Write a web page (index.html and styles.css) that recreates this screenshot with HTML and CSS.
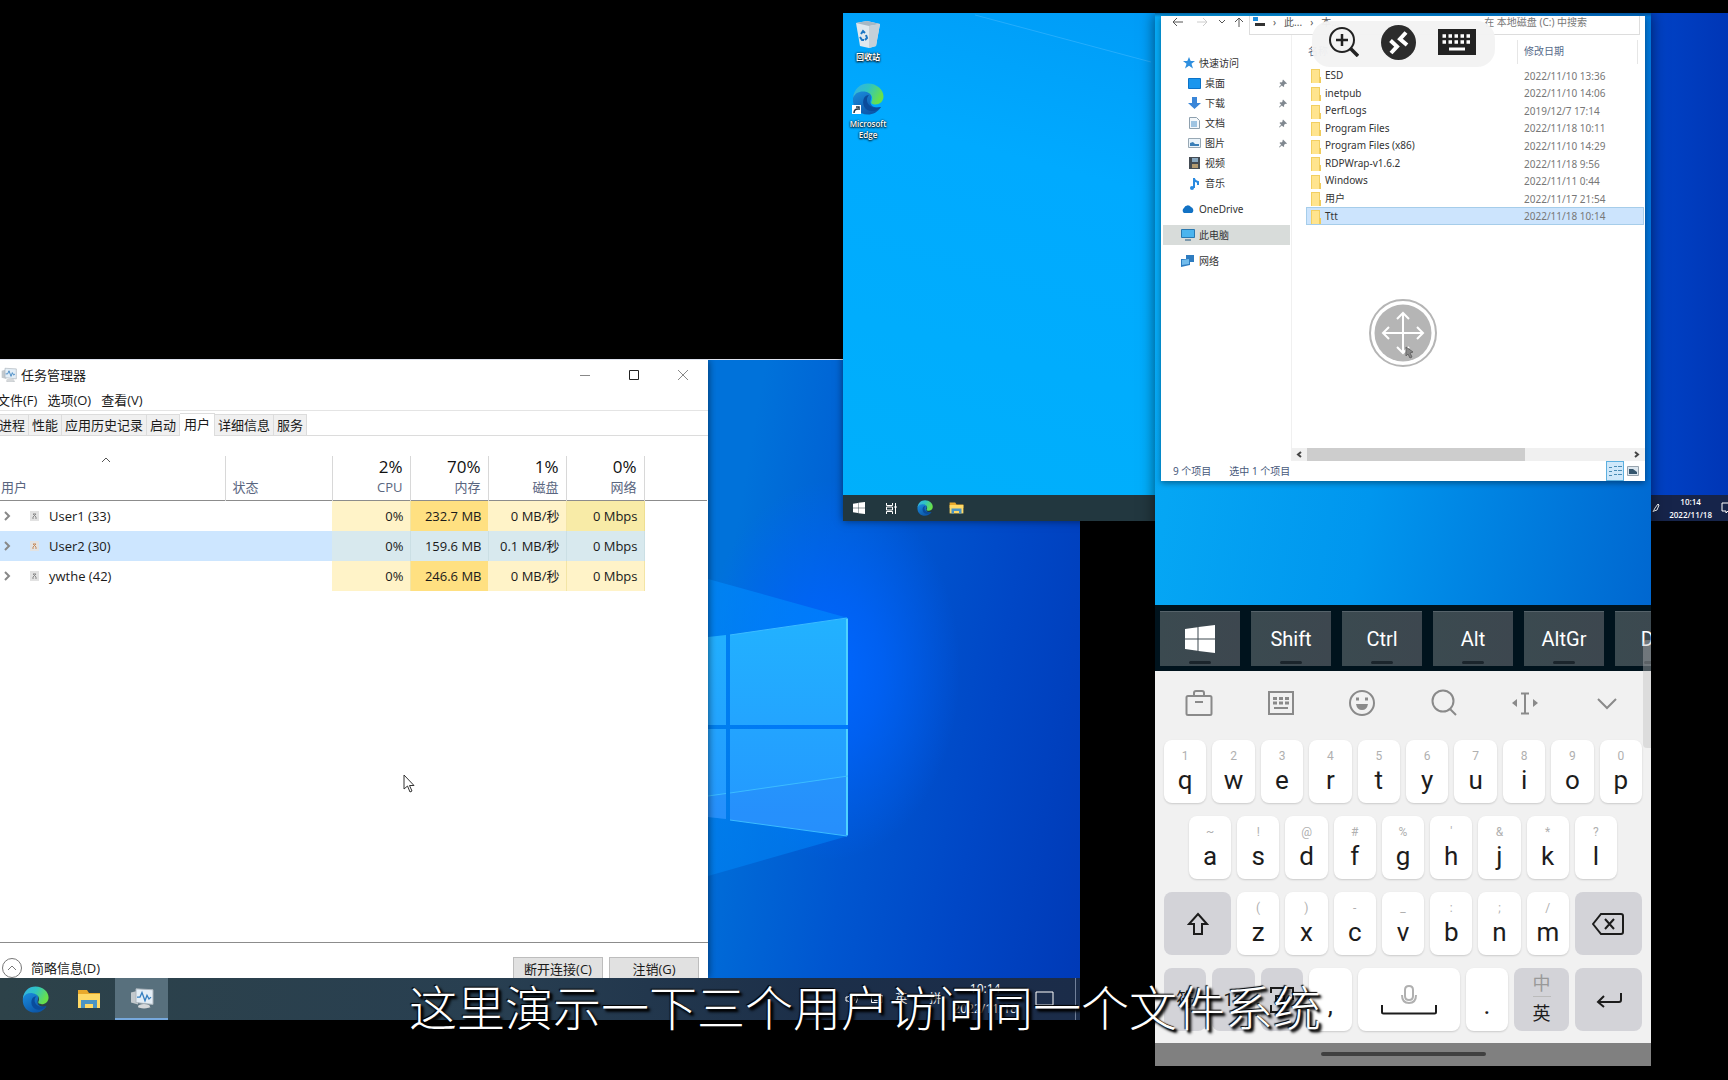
FILE: index.html
```html
<!DOCTYPE html>
<html lang="zh-CN">
<head>
<meta charset="utf-8">
<title>多用户远程桌面演示</title>
<link rel="stylesheet" href="styles.css">
</head>
<body>
<svg class="defs" aria-hidden="true">
  <defs>
    <linearGradient id="edgeTop" x1="0" y1="0" x2="1" y2="0.4"><stop offset="0" stop-color="#35aeea"/><stop offset="0.5" stop-color="#2fc3c4"/><stop offset="1" stop-color="#67e04b"/></linearGradient>
    <linearGradient id="edgeLow" x1="0" y1="0" x2="0.6" y2="1"><stop offset="0" stop-color="#1b8fe0"/><stop offset="1" stop-color="#0c56a8"/></linearGradient>
    <linearGradient id="pane" x1="0" y1="0" x2="0" y2="1"><stop offset="0" stop-color="#22b2ff"/><stop offset="1" stop-color="#2496ff"/></linearGradient>
    <linearGradient id="rayTop" x1="0" y1="0" x2="0" y2="1"><stop offset="0" stop-color="#008cff" stop-opacity=".6"/><stop offset="1" stop-color="#008cff" stop-opacity=".45"/></linearGradient>
    <symbol id="edge" viewBox="0 0 32 32" preserveAspectRatio="none">
      <path fill="url(#edgeLow)" d="M1 15C2 7 9 6 14 8c5 2 6 5 5 8-2 5 1 10 10 8-3 5-8 7.500-13 7.500C7 31.500 0 25 1 15z"/>
      <path fill="url(#edgeTop)" d="M1 15C2 6 8 .5 16 .5c9 0 15.500 6.500 15.500 13 0 5-4 8-8 8-3 0-5-1-4-3 2-4 0-9-7-10C7 8 3 10 1 15z"/>
      <path fill="#0a4c9c" d="M12 15c-3 7 2 14 9 13 3 0 6-2 8-4-8 2-13-1-14-6-.4-3 1-5 2-6-2 0-4 1-5 3z"/>
    </symbol>
    <symbol id="explorer" viewBox="0 0 24 20" preserveAspectRatio="none">
      <path fill="#e9a92b" d="M1 1h9l2 3h11v6H1z"/><path fill="#ffd966" d="M1 5h22v14H1z"/>
      <path fill="#4b94c4" d="M4 11h16v8h-4v-4H8v4H4z"/>
    </symbol>
    <symbol id="monitor" viewBox="0 0 24 24" preserveAspectRatio="none">
      <path fill="#c3c9cd" d="M1 6l7-2v15l-7-2z"/><path fill="#87929a" d="M3 8v8M9 21h10l2 2H8z"/>
      <path fill="#e4eef6" stroke="#a9b3ba" d="M6 2l17 1v16L6 17z"/><path fill="none" stroke="#357fc0" stroke-width="1.300" d="M7 11h3l2-5 3 9 2-6 2 4 2-2"/>
      <ellipse cx="14" cy="21" rx="6" ry="2.500" fill="#d5d8da"/>
    </symbol>
    <symbol id="windows" viewBox="0 0 30 28" preserveAspectRatio="none">
      <path fill="currentColor" d="M0 4l12.500-1.800v11.300H0zM13.500 2L30 0v13.500H13.500zM0 14.500h12.500v11.300L0 24zM13.500 14.500H30V28l-16.500-2z"/>
    </symbol>
    <symbol id="folder" viewBox="0 0 10 14" preserveAspectRatio="none"><path fill="#f2cf61" d="M0 0h9v14H0z"/><path fill="#ffe48e" d="M1 1h7v13H1z"/><path fill="#efcb5c" d="M8 8h2v6H8z"/></symbol>
    <symbol id="pin" viewBox="0 0 8 8"><path fill="#808890" d="M4 0l4 4-1 .5-.7-.2L5 5.600l.2 1.200-.7.700L2.800 5.900.5 8 0 7.500l2.100-2.300L.5 3.500l.7-.7 1.200.2L3.700 1.700 3.500 1z"/></symbol>
  </defs>
</svg>

<main class="stage">

  <section class="desktop desktop-a" aria-label="桌面 1">
    <svg class="wallpaper" width="372" height="660" viewBox="708 360 372 660" aria-hidden="true">
      <path fill="url(#rayTop)" d="M708 579l140 39v218l-140 40z"/>
      <path fill="url(#pane)" d="M708 637l18-2v90h-18zM730 635l118-17v107H730zM708 729h18v90l-18-2zM730 729h118v107l-118-16z"/>
      <path fill="#2a7ff5" opacity=".3" d="M708 796l18-2.500V819l-18-2zM730 793l118-17v60l-118-16z"/>
      <path fill="none" stroke="#4fd2ff" stroke-width="2" d="M847 619v106M847 729v106"/>
      <path fill="none" stroke="#3cbcff" d="M730 635l117-17M730 820l117 16M708 796l18-2.500M730 793l118-17"/>
    </svg>

    <article class="taskmgr">
      <header class="tm-title">
        <svg width="16" height="15"><use href="#monitor"/></svg><span>任务管理器</span>
        <div class="tm-controls">
          <button aria-label="最小化"><svg width="10" height="10"><path d="M0 5.500h10"/></svg></button>
          <button aria-label="最大化" class="max"><svg width="10" height="10"><path d="M.5.500h9v9h-9z"/></svg></button>
          <button aria-label="关闭"><svg width="10" height="10"><path d="M0 0l10 10M10 0L0 10"/></svg></button>
        </div>
      </header>
      <nav class="tm-menu"><button>文件(F)</button><button>选项(O)</button><button>查看(V)</button></nav>
      <div class="tm-tabs" role="tablist">
        <button role="tab">进程</button><button role="tab">性能</button><button role="tab">应用历史记录</button><button role="tab">启动</button><button role="tab" aria-selected="true">用户</button><button role="tab">详细信息</button><button role="tab">服务</button>
      </div>
      <table class="tm-table">
        <colgroup><col class="c-user"><col class="c-state"><col class="c-num"><col class="c-num"><col class="c-num"><col class="c-num"><col></colgroup>
        <thead><tr>
          <th class="left"><svg class="sort" width="10" height="6"><path d="M1 5l4-4 4 4"/></svg><span>用户</span></th>
          <th class="left"><span>状态</span></th>
          <th><b>2%</b><span>CPU</span></th><th><b>70%</b><span>内存</span></th><th><b>1%</b><span>磁盘</span></th><th><b>0%</b><span>网络</span></th><th></th>
        </tr></thead>
        <tbody>
          <tr><td class="user"><svg width="42" height="12"><path class="chev" d="M5 2l4 4-4 4"/><path class="badge" d="M30 1h9v10h-9z"/><path class="face" d="M33 9V7l3-3-3 0 3 3v2"/></svg>User1 (33)</td><td></td><td class="low">0%</td><td class="high">232.7 MB</td><td class="low">0 MB/秒</td><td class="mid">0 Mbps</td><td></td></tr>
          <tr class="selected"><td class="user"><svg width="42" height="12"><path class="chev" d="M5 2l4 4-4 4"/><path class="badge" d="M30 1h9v10h-9z"/><path class="face warm" d="M33 9V7l3-3-3 0 3 3v2"/></svg>User2 (30)</td><td></td><td class="low">0%</td><td class="high">159.6 MB</td><td class="low">0.1 MB/秒</td><td class="mid">0 Mbps</td><td></td></tr>
          <tr><td class="user"><svg width="42" height="12"><path class="chev" d="M5 2l4 4-4 4"/><path class="badge" d="M30 1h9v10h-9z"/><path class="face" d="M33 9V7l3-3-3 0 3 3v2"/></svg>ywthe (42)</td><td></td><td class="low">0%</td><td class="high">246.6 MB</td><td class="low">0 MB/秒</td><td class="low">0 Mbps</td><td></td></tr>
        </tbody>
      </table>
      <footer class="tm-footer">
        <button class="brief"><svg width="22" height="22"><circle cx="11" cy="11" r="9.500"/><path d="M7 13l4-4 4 4"/></svg>简略信息(D)</button>
        <button class="push">断开连接(C)</button><button class="push">注销(G)</button>
      </footer>
    </article>

    <div class="taskbar taskbar-a">
      <button class="tb" aria-label="Edge"><svg width="27" height="27"><use href="#edge"/></svg></button>
      <button class="tb" aria-label="文件资源管理器"><svg width="24" height="20"><use href="#explorer"/></svg></button>
      <button class="tb active" aria-label="任务管理器"><svg width="24" height="22"><use href="#monitor"/></svg></button>
      <div class="tray-a">
        <svg width="14" height="14" viewBox="0 0 14 14"><path d="M1 5h2l4-4v12L3 9H1zM9 5q2 2 0 4M11 3q3 4 0 8"/></svg>
        <svg width="12" height="8" viewBox="0 0 12 8"><path d="M.5.500h11v7H.5zM3 5.500h6"/></svg>
        <span>英</span>
        <span class="ime">拼</span>
        <time>10:14<br>2022/11/18</time>
        <svg width="19" height="16" viewBox="0 0 19 16"><path d="M1 1h17v13H1z"/></svg>
        <i class="peek"></i>
      </div>
    </div>
    <svg class="cursor" width="12" height="19" viewBox="0 0 12 19"><path fill="#fff" stroke="#333" d="M1 1v14l3.500-3 2.500 6 2-1-2.500-5.500H11z"/></svg>
  </section>

  <section class="desktop desktop-b" aria-label="桌面 2">
    <div class="icons-b">
      <div class="dicon">
        <svg width="26" height="28" viewBox="0 0 26 28"><path fill="#dfe8ee" d="M1 3l11-2 13 3-4 22-7 2-9-2z"/><path fill="#a7b8c4" d="M1 3l11-2 13 3-11 2z"/><path fill="#c5d0d8" d="M14 6l11-2-4 22-7 2z"/><path fill="none" stroke="#1c76c4" stroke-width="2" d="M6 14l2-3 2 2M5 17l2 3h2M11 15l1 3-2 2"/></svg>
        <span>回收站</span>
      </div>
      <div class="dicon">
        <div class="shortcut"><svg width="32" height="32"><use href="#edge"/></svg><svg class="arrow" width="9" height="9"><path fill="#fff" d="M0 0h9v9H0z"/><path fill="none" stroke="#234" stroke-width="1.500" d="M2 8q0-4 4-4M4 2h3v3"/></svg></div>
        <span>Microsoft Edge</span>
      </div>
    </div>
    <svg class="beam" viewBox="0 0 312 60" width="312" height="60"><path fill="none" stroke="#47bbff" opacity=".5" d="M132 2l176 47"/></svg>
    <div class="taskbar taskbar-b">
      <button aria-label="开始"><svg width="12" height="12"><use href="#windows"/></svg></button>
      <button aria-label="任务视图"><svg width="12" height="11"><path fill="none" stroke="#fff" d="M1.500 0v2.500h6V0M1.500 11V8.500h6V11M1.500 4h6v3h-6zM10.500 0v11M9 4h3"/></svg></button>
      <button aria-label="Edge"><svg width="16" height="16"><use href="#edge"/></svg></button>
      <button aria-label="文件资源管理器"><svg width="15" height="12"><use href="#explorer"/></svg></button>
      <div class="tray-b">
        <svg width="8" height="10"><path fill="none" stroke="#fff" d="M1 9l2-4 3-4 1 1-2 5-3 1"/></svg>
        <time>10:14<br>2022/11/18</time>
        <svg width="14" height="12"><path fill="none" stroke="#fff" d="M1 1h12v8H7L5 11V9H1z"/></svg>
      </div>
    </div>
  </section>

  <section class="phone" aria-label="手机远程桌面">
    <div class="phone-screen">
      <article class="files">
        <div class="addr">
          <svg width="85" height="12"><path class="n" d="M12 6h10M16 2l-4 4 4 4"/><path class="n dim" d="M36 6h10M42 2l4 4-4 4"/><path class="n" d="M58 4l3 3 3-3M78 11V2M74 6l4-4 4 4"/></svg>
          <div class="crumbs">
            <svg width="12" height="12"><path fill="#1e90e0" d="M0 1h5v4H0z"/><path fill="#333" d="M2 7h10v3H2z"/></svg>
            <span>›</span><span>此...</span><span>›</span><span>本...</span>
            <span class="search">在 本地磁盘 (C:) 中搜索</span>
          </div>
        </div>
        <div class="files-body">
          <nav class="tree">
            <a href="#"><svg width="12" height="12"><path fill="#2f8fdf" d="M6 0l1.700 4H12L8.500 6.800 10 11.500 6 8.800 2 11.500l1.500-4.700L0 4h4.300z"/></svg>快速访问</a>
            <a href="#" class="sub"><svg width="13" height="11"><path fill="#1a96ee" stroke="#0a72c8" d="M.5.500h12v10H.5z"/></svg>桌面<svg class="pinned" width="8" height="9"><use href="#pin"/></svg></a>
            <a href="#" class="sub"><svg width="13" height="12"><path fill="#3a86d8" d="M4 0h5v6h4l-6.500 6L0 6h4z"/></svg>下载<svg class="pinned" width="8" height="9"><use href="#pin"/></svg></a>
            <a href="#" class="sub"><svg width="13" height="12"><path fill="#f4f8fb" stroke="#8ea0ae" d="M1.500.5h7l3 3v8h-10z"/><path stroke="#4a90c8" d="M3 5h6M3 7h6M3 9h6"/></svg>文档<svg class="pinned" width="8" height="9"><use href="#pin"/></svg></a>
            <a href="#" class="sub"><svg width="13" height="10"><path fill="#eaf4fb" stroke="#98a8b4" d="M.5.500h12v9H.5z"/><path fill="#3a7fb8" d="M2 8V5l3-1 2 2h4v2z"/></svg>图片<svg class="pinned" width="8" height="9"><use href="#pin"/></svg></a>
            <a href="#" class="sub"><svg width="13" height="12"><path fill="#444c54" d="M1 0h11v12H1z"/><path fill="#88a8c0" d="M4 1h6v4H4z"/><path fill="#b29a70" d="M4 7h6v4H4z"/></svg>视频</a>
            <a href="#" class="sub"><svg width="13" height="13"><path fill="none" stroke="#2a8ae0" stroke-width="2" d="M6 11V1q0 3 4 4v3"/><circle cx="4" cy="11" r="2" fill="#2a8ae0"/></svg>音乐</a>
            <a href="#" class="gap"><svg width="14" height="10"><path fill="#1272c4" d="M3 9a3 3 0 010-5 4 4 0 017-1 3.500 3.500 0 011 6z"/></svg>OneDrive</a>
            <a href="#" class="gap current"><svg width="14" height="12"><path fill="#4ab4ee" stroke="#2878b0" d="M.5.500h13v8H.5z"/><path fill="#7a98ac" d="M4 10h6v2H4z"/></svg>此电脑</a>
            <a href="#" class="gap"><svg width="14" height="12"><path fill="#2e7cc0" d="M5 0h8v7H9v3L0 12V4h5z"/><path fill="#72bcec" d="M1 5l7-1v5l-7 1z"/></svg>网络</a>
          </nav>
          <div class="list">
            <div class="list-head"><span class="h-name">名称</span><span class="h-date">修改日期</span></div>
            <table class="list-table">
              <colgroup><col class="l-name"><col></colgroup>
              <tbody>
              <tr><td><svg width="10" height="14"><use href="#folder"/></svg>ESD</td><td>2022/11/10 13:36</td></tr>
              <tr><td><svg width="10" height="14"><use href="#folder"/></svg>inetpub</td><td>2022/11/10 14:06</td></tr>
              <tr><td><svg width="10" height="14"><use href="#folder"/></svg>PerfLogs</td><td>2019/12/7 17:14</td></tr>
              <tr><td><svg width="10" height="14"><use href="#folder"/></svg>Program Files</td><td>2022/11/18 10:11</td></tr>
              <tr><td><svg width="10" height="14"><use href="#folder"/></svg>Program Files (x86)</td><td>2022/11/10 14:29</td></tr>
              <tr><td><svg width="10" height="14"><use href="#folder"/></svg>RDPWrap-v1.6.2</td><td>2022/11/18 9:56</td></tr>
              <tr><td><svg width="10" height="14"><use href="#folder"/></svg>Windows</td><td>2022/11/11 0:44</td></tr>
              <tr><td><svg width="10" height="14"><use href="#folder"/></svg>用户</td><td>2022/11/17 21:54</td></tr>
              <tr class="selected"><td><svg width="10" height="14"><use href="#folder"/></svg>Ttt</td><td>2022/11/18 10:14</td></tr>
              </tbody>
            </table>
            <div class="hscroll"><svg width="15" height="13"><path d="M9 4L6 6.500 9 9"/></svg><i class="thumb"></i><svg class="end" width="15" height="13"><path d="M6 4l3 2.500L6 9"/></svg></div>
          </div>
        </div>
        <footer class="files-foot"><span>9 个项目</span><span>选中 1 个项目</span>
          <div class="views"><button class="on" aria-label="详细信息"><svg width="14" height="12"><path stroke="#4a8cb4" d="M1 2.500h3M1 6.500h3M1 10.500h3M6 1.500h3M10 1.500h4M6 5.500h3M10 5.500h4M6 9.500h3M10 9.500h4"/></svg></button><button aria-label="大图标"><svg width="12" height="10"><path fill="#dce6ee" stroke="#98a4ae" d="M.5.500h11v9H.5z"/><path fill="#35566e" d="M2 3h4l4 3v2H2z"/></svg></button></div>
        </footer>
      </article>

      <div class="pill">
        <button aria-label="缩放"><svg width="30" height="30" viewBox="0 0 30 30"><circle cx="13" cy="13" r="12" fill="none" stroke="#222" stroke-width="2"/><path stroke="#222" stroke-width="2.500" d="M13 7v12M7 13h12"/><path stroke="#222" stroke-width="3.500" d="M21.500 21.500L29 29"/></svg></button>
        <button aria-label="远程桌面"><svg width="35" height="35" viewBox="0 0 35 35"><circle cx="17.500" cy="17.500" r="17.500" fill="#2c2c2c"/><path fill="none" stroke="#fff" stroke-width="4" d="M9.500 15.500l6.500 6-6 6.500M25 7.500l-6 6.500 7 6"/></svg></button>
        <button aria-label="键盘"><svg width="38" height="26" viewBox="0 0 38 26"><path fill="#222" d="M0 0h38v26H0z"/><path stroke="#fff" stroke-width="3.500" stroke-dasharray="3.500 2.500" d="M4.500 7h29M4.500 13h29"/><path stroke="#fff" stroke-width="3" d="M11 20h16"/></svg></button>
      </div>
      <svg class="pan" width="68" height="68" viewBox="0 0 68 68"><circle cx="34" cy="34" r="33" fill="#fff" stroke="#b5b5b5" stroke-width="2"/><circle cx="34" cy="34" r="28.500" fill="#b5b5b5"/><path fill="none" stroke="#fff" stroke-width="2" d="M34 14v40M14 34h40M28 20l6-6 6 6M28 48l6 6 6-6M20 28l-6 6 6 6M48 28l6 6-6 6"/><path fill="#888" stroke="#666" d="M37 48v9l2-2 2 4 2-1-2-4 3-1z"/></svg>
    </div>

    <div class="modkeys">
      <button aria-label="Win"><svg width="30" height="28"><use href="#windows"/></svg></button><button>Shift</button><button>Ctrl</button><button>Alt</button><button>AltGr</button><button>Del</button>
    </div>

    <div class="keyboard">
      <div class="kb-tools">
        <button aria-label="工具箱"><svg width="28" height="28" viewBox="0 0 28 28"><path d="M3 7h22q1.500 0 1.500 1.500v16q0 1.500-1.500 1.500H3q-1.500 0-1.500-1.500v-16Q1.500 7 3 7zM9 7V4q0-2 2-2h6q2 0 2 2v3M10 13h8"/></svg></button>
        <button aria-label="键盘"><svg width="28" height="28" viewBox="0 0 28 28"><path d="M2 3h24v22H2zM7 19h14"/><path stroke-width="3" stroke-dasharray="4 2" d="M6 9.500h16M6 14h16"/></svg></button>
        <button aria-label="表情"><svg width="28" height="28" viewBox="0 0 28 28"><circle cx="14" cy="14" r="12"/><path class="fill" d="M8 15h12q-1 6-6 6t-6-6z"/><path stroke-width="3" d="M8 10h3M17 10h3"/></svg></button>
        <button aria-label="搜索"><svg width="28" height="28" viewBox="0 0 28 28"><circle cx="13" cy="12" r="10.500"/><path d="M20 20l6 6"/></svg></button>
        <button aria-label="光标"><svg width="28" height="28" viewBox="0 0 28 28"><path d="M14 5v19M10 4.500h8M10 24.500h8"/><path class="fill" d="M6 10v8l-5-4zM22 10v8l5-4z"/></svg></button>
        <button aria-label="收起"><svg width="28" height="28" viewBox="0 0 28 28"><path d="M5 10l9 9 9-9"/></svg></button>
      </div>
      <div class="krow">
        <button class="key"><small>1</small>q</button><button class="key"><small>2</small>w</button><button class="key"><small>3</small>e</button><button class="key"><small>4</small>r</button><button class="key"><small>5</small>t</button><button class="key"><small>6</small>y</button><button class="key"><small>7</small>u</button><button class="key"><small>8</small>i</button><button class="key"><small>9</small>o</button><button class="key"><small>0</small>p</button>
      </div>
      <div class="krow inset">
        <button class="key"><small>~</small>a</button><button class="key"><small>!</small>s</button><button class="key"><small>@</small>d</button><button class="key"><small>#</small>f</button><button class="key"><small>%</small>g</button><button class="key"><small>'</small>h</button><button class="key"><small>&amp;</small>j</button><button class="key"><small>*</small>k</button><button class="key"><small>?</small>l</button>
      </div>
      <div class="krow">
        <button class="key fn wide" aria-label="Shift"><svg width="22" height="24" viewBox="0 0 22 24"><path d="M11 2l9 10h-5v10H7V12H2z"/></svg></button><button class="key"><small>(</small>z</button><button class="key"><small>)</small>x</button><button class="key"><small>-</small>c</button><button class="key"><small>_</small>v</button><button class="key"><small>:</small>b</button><button class="key"><small>;</small>n</button><button class="key"><small>/</small>m</button><button class="key fn wide" aria-label="退格"><svg width="32" height="22" viewBox="0 0 32 22"><path d="M9 1h20q2 0 2 2v16q0 2-2 2H9L1 11zM13 6l9 10M22 6l-9 10"/></svg></button>
      </div>
      <div class="krow">
        <button class="key fn text">符</button><button class="key fn text">12</button><button class="key fn" aria-label="切换"><svg width="24" height="26" viewBox="0 0 24 26"><path d="M1 6V1h22v12M1 18v7h8M6 9h8v8H6z"/></svg></button><button class="key mark">,</button>
        <button class="key space" aria-label="空格"><svg width="56" height="30" viewBox="0 0 56 30"><path class="mic" d="M28 1q4 0 4 4v6q0 4-4 4t-4-4V5q0-4 4-4zM21 10q0 8 7 8t7-8"/><path d="M1 20v7q0 1.500 1.500 1.500h51q1.500 0 1.500-1.500v-7"/></svg></button>
        <button class="key mark">.</button><button class="key fn lang"><span>中</span><span>英</span></button><button class="key fn wide" aria-label="回车"><svg width="26" height="16" viewBox="0 0 26 16"><path d="M25 1v7q0 2-2 2H2M8 4l-6 6 6 5"/></svg></button>
      </div>
    </div>
    <div class="gesture"><i></i></div>
    <i class="grip"></i>
  </section>

  <p class="caption">这里演示一下三个用户访问同一个文件系统</p>
</main>
</body>
</html>
```

FILE: styles.css
```css
* { box-sizing: border-box; }
body { margin: 0; background: #000; font-family: "Open Sans", "Noto Sans CJK SC", sans-serif; }
button { border: 0; padding: 0; margin: 0; background: none; font: inherit; color: inherit; display: flex; align-items: center; justify-content: center; }
a { color: inherit; text-decoration: none; }
table { border-collapse: collapse; table-layout: fixed; width: 100%; }
td, th { padding: 0; font-weight: 400; }
svg { display: block; flex: none; }
.defs { position: absolute; width: 0; height: 0; }

.stage { position: relative; min-height: 100vh; overflow: hidden; background: #000; }
.desktop { position: absolute; display: flex; flex-direction: column; overflow: hidden; }

/* First desktop */
.desktop-a {
  left: 0; top: 359px; width: 1080px; height: 661px; border-top: 1px solid #dfe3ee;
  background: radial-gradient(ellipse 130px 190px at 830px 310px, #0066ff 0, rgba(0,100,255,.7) 40%, transparent 100%), linear-gradient(100deg, #0072da 64%, #0056d0 78%, #0047c6 88%, #0039b6 100%);
}
.wallpaper { position: absolute; left: 708px; top: 0; }
.taskmgr { position: relative; flex: 1; width: 708px; display: flex; flex-direction: column; background: #fff; color: #1a1a1a; font-size: 13px; line-height: 18px; box-shadow: 0 0 8px rgba(0,0,0,.6); }
.tm-title { display: flex; align-items: center; gap: 4px; height: 29px; padding-left: 1px; }
.tm-controls { display: flex; margin-left: auto; padding-right: 1px; }
.tm-controls button { width: 49px; height: 26px; }
.tm-controls path { fill: none; stroke: #888; }
.tm-controls .max path { stroke: #222; }
.sort path { fill: none; stroke: #555; }
.tm-menu { display: flex; gap: 10px; height: 22px; margin-left: -3px; border-bottom: 1px solid #e4e4e4; }
.tm-tabs { display: flex; align-items: flex-end; height: 25px; margin-left: -5px; border-bottom: 1px solid #dcdcdc; }
.tm-tabs button { height: 21px; padding: 0 3px 0 2px; background: #f0f0f0; border: 1px solid #dcdcdc; border-bottom: 0; }
.tm-tabs button + button { border-left: 0; padding-left: 3px; }
.tm-tabs button:first-child { padding-left: 3px; }
.tm-tabs button[aria-selected] { height: 23px; padding: 0 4px 3px; background: #fff; margin-bottom: -1px; }
.tm-table { margin-top: 20px; }
.c-user { width: 225px; } .c-state { width: 107px; } .c-num { width: 78px; }
.tm-table thead tr { height: 44px; border-bottom: 1px solid #8c8c8c; }
.tm-table th { position: relative; text-align: right; vertical-align: bottom; padding: 0 7px 4px 0; border-right: 1px solid #d8d8d8; color: #5a6680; }
.tm-table th.left { text-align: left; padding-left: 7px; }
.tm-table th.left:first-child { padding-left: 1px; }
.tm-table th:last-child { border-right: 0; }
.tm-table th b, .tm-table th span { display: block; }
.tm-table th b { font-weight: 400; font-size: 17px; line-height: 22px; color: #111; }
.tm-table thead th { line-height: 18px; padding-top: 0; height: 44px; }
.sort { margin: 0 0 15px 100px; }
.tm-table tbody tr { height: 30px; }
.tm-table tbody td { text-align: right; padding-right: 6px; border-right: 1px solid transparent; }
.tm-table tbody .user { display: flex; align-items: center; gap: 7px; height: 30px; border: 0; }
.chev { fill: none; stroke: #888; stroke-width: 2; }
.badge { fill: #e2e2e2; }
.face { fill: none; stroke: #888; }
.face.warm { stroke: #c68a5a; }
.tm-table .low { background: #fff3c8; border-color: #f3e5a6; }
.tm-table .high { background: #ffe081; }
.tm-table .mid { background: #f8eba7; border-color: #eedf92; }
.tm-table .selected { background: #cde6ff; }
.tm-table .selected .low, .tm-table .selected .high, .tm-table .selected .mid { background: #d8e9ee; border-color: #cbdfe4; }
.tm-table .selected td:last-child { background: #fff; }
.tm-footer { display: flex; align-items: flex-end; gap: 6px; height: 36px; margin-top: auto; padding-right: 9px; border-top: 1px solid #8c8c8c; }
.brief { gap: 8px; height: 20px; margin-right: auto; padding-left: 1px; }
.brief svg { fill: none; stroke: #777; }
.push { width: 90px; height: 21px; padding-top: 2px; background: #e1e1e1; border: 1px solid #bdbdbd; border-bottom: 0; }

.taskbar { display: flex; color: #fff; }
.taskbar-a { position: relative; height: 42px; padding-left: 9px; background: linear-gradient(90deg, #2d4249, #283f51 45%, #1c2f49 75%, #1b2c49); }
.tb { width: 53px; }
.tb.active { background: #58707d; border-bottom: 2px solid #76a8dc; }
.tray-a { display: flex; align-items: center; gap: 12px; margin-left: auto; padding-right: 4px; font-size: 12px; line-height: 20px; text-align: center; }
.tray-a svg { fill: none; stroke: #fff; }
.tray-a time { margin-right: 6px; }
.ime { padding-left: 10px; }
.peek { width: 1px; align-self: stretch; background: #718099; margin-left: 9px; }
.cursor { position: absolute; left: 403px; top: 414px; }

/* Second desktop */
.desktop-b {
  left: 843px; right: 0; top: 13px; height: 508px; box-shadow: 0 0 8px rgba(0,0,0,.5);
  background: linear-gradient(90deg, transparent 310px, #0044c8 800px, #0036b6), linear-gradient(195deg, #0090f0, #00aaff 45%, #00b0fb);
}
.icons-b { display: flex; flex-direction: column; gap: 21px; width: 50px; padding-top: 7px; }
.dicon { display: flex; flex-direction: column; align-items: center; gap: 3px; color: #fff; font-size: 8px; line-height: 11px; font-weight: 600; text-align: center; text-shadow: 0 1px 2px #000, 0 0 2px #000; }
.shortcut { position: relative; }
.arrow { position: absolute; left: 0; bottom: 1px; }
.beam { position: absolute; left: 0; top: 0; }
.taskbar-b { height: 26px; margin-top: auto; padding-left: 3px; background: linear-gradient(90deg, #22373f 35%, #16244a 92%); }
.taskbar-b button { width: 32px; padding-right: 6px; }
.taskbar-b button:nth-child(n+3) { padding-right: 3px; }
.tray-b { display: flex; align-items: center; gap: 9px; margin-left: auto; margin-right: -7px; font-size: 8px; font-weight: 600; line-height: 13px; text-align: center; }

/* Phone */
.phone { position: absolute; left: 1155px; top: 13px; width: 496px; display: flex; flex-direction: column; box-shadow: 0 0 14px rgba(0,0,0,.55); overflow: hidden; }
.phone-screen { position: relative; height: 592px; padding: 3px 6px 0; background: linear-gradient(180deg, rgba(0,40,90,.5), transparent 4px), linear-gradient(100deg, #06a9f5 10%, #0096ee 50%, #0067d0 100%); }
.files { display: flex; flex-direction: column; height: 465px; background: #fff; font-family: "Noto Sans", "Noto Sans CJK SC", sans-serif; font-size: 10px; line-height: 14px; color: #333; overflow: hidden; box-shadow: 0 2px 6px rgba(0,0,0,.4); }
.addr { display: flex; gap: 3px; height: 19px; padding-right: 5px; }
.n { fill: none; stroke: #555; }
.n.dim { stroke: #ccc; }
.crumbs { flex: 1; display: flex; gap: 8px; padding-left: 3px; line-height: 12px; color: #555; border: 1px solid #ddd; border-top: 0; }
.search { margin-left: auto; padding-right: 52px; color: #777; }
.files-body { flex: 1; display: flex; }
.tree { width: 131px; padding: 18px 1px 0 2px; border-right: 1px solid #f0f0f0; }
.tree a { display: flex; align-items: center; gap: 4px; height: 20px; padding-left: 20px; }
.tree .sub { padding-left: 25px; gap: 4px; }
.tree .gap { margin-top: 6px; padding-left: 18px; }
.tree .current { background: #d8dcda; }
.tree .pinned { margin-left: auto; margin-right: 3px; }
.list { flex: 1; min-width: 0; display: flex; flex-direction: column; overflow: hidden; }
.list-head { display: flex; height: 24px; margin: 5px 0 3px 14px; line-height: 22px; color: #566a8a; }
.h-name { width: 212px; padding-left: 2px; border-right: 1px solid #e6e6e6; }
.h-date { width: 120px; padding-left: 6px; border-right: 1px solid #e6e6e6; }
.list-table { height: 158px; width: auto; margin: 0 1px 0 14px; }
.l-name { width: 218px; }
.list-table td { line-height: 14px; overflow: hidden; white-space: nowrap; color: #777; }
.list-table td:first-child { padding-left: 5px; color: #333; }
.list-table td svg { display: inline-block; vertical-align: middle; margin-right: 4px; }
.list-table .selected { background: #cce4fd; outline: 1px solid #a6cdea; outline-offset: -1px; }
.hscroll { display: flex; height: 13px; margin-top: auto; background: #f0f0f0; }
.hscroll path { fill: none; stroke: #444; stroke-width: 2; }
.hscroll .end { margin-left: auto; margin-right: 1px; }
.thumb { width: 218px; background: #cdcdcd; }
.files-foot { display: flex; align-items: center; gap: 18px; height: 20px; padding: 0 6px 0 12px; color: #46587a; }
.views { display: flex; align-self: stretch; gap: 3px; margin-left: auto; }
.views .on { width: 18px; background: #cfe8fa; border: 1px solid #5cb0e0; }
.pill { position: absolute; left: 157px; top: 8px; width: 183px; height: 46px; display: flex; align-items: center; justify-content: space-between; padding: 0 19px 4px 17px; border-radius: 18px; background: rgba(242,242,242,.96); }
.pan { position: absolute; left: 214px; top: 286px; }

.modkeys { display: flex; gap: 11px; height: 66px; padding: 6px 0 5px 5px; background: #00131d; overflow: hidden; color: #fff; font: 20px Roboto, sans-serif; }
.modkeys button { position: relative; flex: none; width: 80px; background: linear-gradient(90deg, #3b4a50, #3d474f); border-top: 1px solid #56636a; }
.modkeys button::after { content: ""; position: absolute; left: 29px; bottom: 2px; width: 22px; height: 3px; border-radius: 2px; background: #1b252c; }

.keyboard { display: flex; flex-direction: column; gap: 13px; padding: 0 9px 12px; background: #f1f1f1; font-family: Roboto, "Noto Sans CJK SC", sans-serif; color: #1c1c1c; }
.kb-tools { display: flex; justify-content: space-between; height: 56px; padding: 8px 21px 0 21px; }
.kb-tools svg, .key svg { fill: none; stroke: #8a8a8a; stroke-width: 2; }
.kb-tools .fill { fill: #8a8a8a; stroke: none; }
.krow { display: flex; gap: 6px; height: 63px; }
.krow.inset { padding: 0 25px; }
.key { position: relative; flex: 1 1 0; flex-direction: column; border-radius: 8px; background: #fff; box-shadow: 0 1px 2px rgba(0,0,0,.16); font-size: 26px; line-height: 30px; }
.key small { height: 17px; font-size: 12px; line-height: 16px; color: #b0b0b0; }
.key svg { stroke: #1c1c1c; }
.key .mic { stroke: #b0b0b0; }
.fn { background: #d3d3d8; box-shadow: none; }
.wide { flex: 0 0 67px; }
.space { flex: 0 0 102px; }
.mark { padding-top: 11px; }
.text { font-size: 18px; }
.lang { flex: 0 0 55px; font-size: 18px; line-height: 25px; gap: 4px; padding-bottom: 2px; }
.lang span:first-child { color: #999; border-bottom: 1px solid #bbb; }
.gesture { display: flex; align-items: center; justify-content: center; height: 23px; padding-bottom: 2px; background: #808080; }
.gesture i { width: 165px; height: 4px; border-radius: 2px; background: #404040; }
.grip { position: absolute; right: 0; top: 627px; width: 8px; height: 108px; border-radius: 4px 0 0 4px; background: rgba(190,190,190,.4); }

.caption { position: absolute; left: 0; right: 0; top: 970px; margin: 0; padding-left: 2px; text-align: center; font: 300 48px/70px "Noto Sans CJK SC", sans-serif; color: #fff; text-shadow: 2px 2px 2px #000, 3px 3px 3px #000, -1px -1px 1px #000; white-space: nowrap; }
```
